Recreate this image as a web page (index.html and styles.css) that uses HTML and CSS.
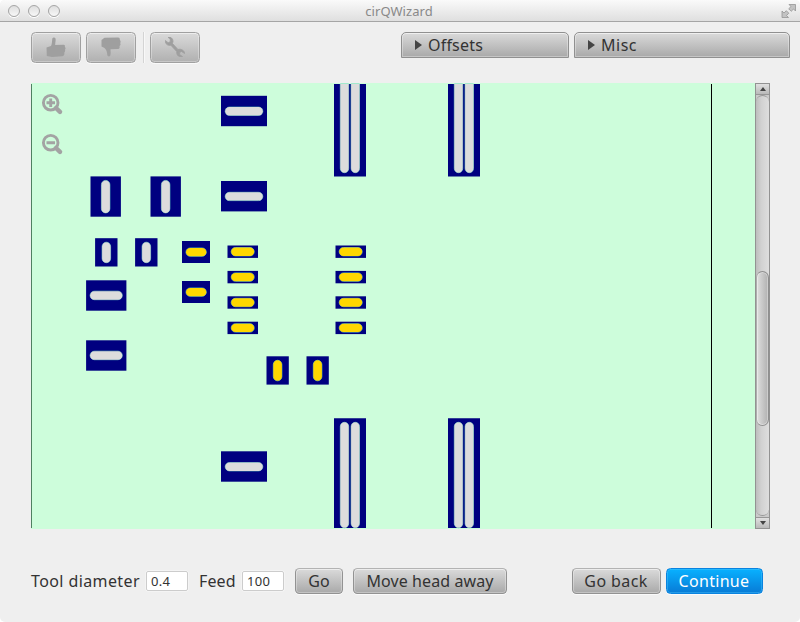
FILE: index.html
```html
<!DOCTYPE html>
<html lang="en">
<head>
<meta charset="utf-8">
<title>cirQWizard</title>
<link rel="stylesheet" href="styles.css">
</head>
<body>
<div class="window">
  <header class="titlebar">
    <div class="lights"><i></i><i></i><i></i></div>
    <h1><span>cirQWizard</span></h1>
    <svg class="expand" width="16" height="16" viewBox="0 0 16 16"><path d="M8 1.5h6.500v6.500l-2-2-2.300 2.300-2.500-2.500L10 3.500zM7.500 14.500H1V8l2 2 2.300-2.300 2.500 2.500L5.500 12.500z"/></svg>
  </header>

  <div class="toolbar">
    <button class="btn tool" aria-label="Good"><svg width="20" height="20" viewBox="0 0 20 20"><path d="M0.500 10.500 L5 9 C6 7.500 6 4 6.300 1.500 C7 0 9 0.200 9.500 1.500 C10 3.500 9.200 5.500 9.200 8 L17.500 7.700 C19 7.700 19.300 9 18.800 10 C19.800 10.500 19.800 12 19 12.800 C19.500 14 19 15 18.300 15.500 C18.700 17.500 18 19 16.500 19.200 L6 20 L0.800 19z"/></svg></button>
    <button class="btn tool" aria-label="Bad"><svg width="20" height="20" viewBox="0 0 20 20"><path d="M0.500 3 L3.500 0.800 L17 0.500 C19 0.500 19 2 18.800 3 C20 4 19.700 5.500 19.200 6 C19.800 7.500 19.500 8.700 18.500 9 C19 10.500 18.500 12 17 12 L9.500 12.200 C9.500 14.500 10 16.500 9.300 18.500 C8.500 20 6.500 19.500 6.300 18 C6.300 15.500 5.500 13 3.500 11 L0.500 9.500z"/></svg></button>
    <span class="separator"></span>
    <button class="btn tool wrench" aria-label="Settings"><svg width="20" height="20" viewBox="0 0 20 20"><path d="M3 0.300 C5.500-0.500 8 1.500 8 4.500 L7.500 6.500 L13 12.500 C16 11.500 19.500 13.500 19.700 16.500 L16.500 14.500 L14.500 15.500 L14.700 17.700 L17.500 19.500 C14.500 20.700 11.300 18.500 11.700 14.500 L5.800 8.200 C3 9 0 7 0.200 3.500 L3.200 5.700 L5.300 4.700 L5.200 2z"/></svg></button>
    <div class="pane offsets"><i class="arrow"></i><span class="t-offsets">Offsets</span></div>
    <div class="pane misc"><i class="arrow"></i><span class="t-misc">Misc</span></div>
  </div>

  <main class="board">
    <svg class="canvas" width="724" height="446" viewBox="31 83 724 446">
      <defs>
        <g id="header-top"><path class="pad" d="M0 84h32v92.600H0z"/><path class="slot" d="M6.300 84h8.400v84.500a4.200 4.200 0 0 1-8.400 0zM17.100 84h8.400v84.500a4.200 4.200 0 0 1-8.400 0z"/></g>
        <g id="header-bottom"><path class="pad" d="M0 418.300h32V528H0z"/><rect class="slot" x="6.300" y="422.300" width="8.400" height="105.400" rx="4.200"/><rect class="slot" x="17.100" y="422.300" width="8.400" height="105.400" rx="4.200"/></g>
        <g id="wide"><rect class="pad" width="46" height="30.400"/><rect class="slot" x="4.200" y="11.300" width="37.600" height="8.300" rx="4.150"/></g>
        <g id="tall"><rect class="pad" width="30.400" height="40.300"/><rect class="slot" x="10.900" y="4" width="8.500" height="32.500" rx="4.250"/></g>
        <g id="small"><rect class="pad" width="22.400" height="28.300"/><rect class="slot" x="7" y="4" width="8.500" height="20.500" rx="4.250"/></g>
        <g id="medium"><rect class="pad" width="40.300" height="30.400"/><rect class="slot" x="4" y="10.900" width="32.200" height="8.500" rx="4.250"/></g>
        <g id="active-wide"><rect class="pad" width="28" height="22"/><rect class="slot active" x="4" y="7" width="20.300" height="8.300" rx="4.150"/></g>
        <g id="active-pin"><rect class="pad" width="30.500" height="12.400"/><rect class="slot active" x="3.700" y="2" width="23" height="8.400" rx="4.200"/></g>
      </defs>
      <path class="edge left" d="M31.500 84v444"/>
      <path class="edge" d="M711.500 84v444"/>
      <use href="#header-top" x="334"/><use href="#header-top" x="448"/>
      <use href="#header-bottom" x="334"/><use href="#header-bottom" x="448"/>
      <use href="#wide" x="221" y="95.800"/><use href="#wide" x="221" y="181"/><use href="#wide" x="221" y="451.300"/>
      <use href="#tall" x="90.500" y="176.400"/><use href="#tall" x="150.500" y="176.400"/>
      <use href="#small" x="95.100" y="238.200"/><use href="#small" x="135.100" y="238.200"/>
      <use href="#medium" x="86.100" y="280.300"/><use href="#medium" x="86.100" y="340.300"/>
      <use href="#active-wide" x="182" y="241"/><use href="#active-wide" x="182" y="281"/>
      <use href="#active-pin" x="227.500" y="245.500"/><use href="#active-pin" x="227.500" y="270.900"/><use href="#active-pin" x="227.500" y="296.300"/><use href="#active-pin" x="227.500" y="321.700"/>
      <use href="#active-pin" x="335.500" y="245.500"/><use href="#active-pin" x="335.500" y="270.900"/><use href="#active-pin" x="335.500" y="296.300"/><use href="#active-pin" x="335.500" y="321.700"/>
      <g><rect class="pad" x="266.500" y="356.300" width="22.300" height="28.300"/><rect class="slot active" x="273.300" y="360.300" width="8.600" height="20.500" rx="4.300"/>
      <rect class="pad" x="306.500" y="356.300" width="22.300" height="28.300"/><rect class="slot active" x="313.300" y="360.300" width="8.600" height="20.500" rx="4.300"/></g>
      <g class="zoom"><circle cx="50.700" cy="102.700" r="7.300"/><path class="handle" d="M56 108l4 3.900"/><path d="M46.500 102.700h8.500M50.700 98.500v8.500"/></g>
      <g class="zoom"><circle cx="50.700" cy="142.700" r="7.300"/><path class="handle" d="M56 148l4 3.900"/><path d="M46.500 142.700h8.500"/></g>
    </svg>
    <div class="scrollbar">
      <span class="cap"><i class="up"></i></span>
      <div class="track"><div class="thumb"></div></div>
      <span class="cap"><i class="down"></i></span>
    </div>
  </main>

  <footer class="controls">
    <label class="t-tool" for="tool">Tool diameter</label>
    <input id="tool" class="field" value="0.4">
    <label class="t-feed" for="feed">Feed</label>
    <input id="feed" class="field" value="100">
    <button class="btn go"><span class="t-go">Go</span></button>
    <button class="btn move"><span class="t-move">Move head away</span></button>
    <button class="btn back"><span class="t-back">Go back</span></button>
    <button class="btn continue"><span class="t-continue">Continue</span></button>
  </footer>
</div>
</body>
</html>
```

FILE: styles.css
```css
* { box-sizing: border-box; }
html { background: #fff; }
body { margin: 0; font: 16px/20px "Noto Sans", "Open Sans", sans-serif; color: #333; }
.window { width: 800px; height: 622px; background: #efefef; border-radius: 5px; overflow: hidden; display: flex; flex-direction: column; }

.titlebar { height: 22px; flex: none; display: flex; align-items: center; background: linear-gradient(#fafafa, #dfdfdf); border-bottom: 1px solid #a5a5a5; }
.lights { display: flex; gap: 8px; width: 100px; padding-left: 8px; }
.lights i { width: 12px; height: 12px; border-radius: 50%; border: 1px solid #a4a4a4; background: linear-gradient(#dedede, #f8f8f8); box-shadow: 0 1px #fff; }
h1 { flex: 1; margin: 0 0 0 -2px; text-align: center; font-size: 13px; line-height: 20px; font-weight: 400; color: #898989; letter-spacing: .05px; }
.expand { margin: 1px 3px 0 81px; fill: #c3c3c3; stroke: #969696; stroke-width: .8; }

.toolbar { display: flex; height: 41px; padding: 10px 10px 0 31px; flex: none; }
.btn { font: inherit; color: #333; border: 1px solid #929292; border-top-color: #b3b3b3; border-radius: 4.500px; padding: 0; background: linear-gradient(#dadada, #a9a9a9); box-shadow: inset 0 0 0 1px rgba(255,255,255,.3), inset 0 1px rgba(255,255,255,.35), 0 1px #fafafa; height: 26px; display: flex; align-items: center; justify-content: center; white-space: nowrap; flex: none; }
.tool { width: 50px; height: 31px; margin-right: 5px; border-color: #a0a0a0; background: linear-gradient(#dadada, #b0b0b0); }
.tool svg { fill: #9f9f9f; margin-top: -1px; }
.wrench path { stroke: #9f9f9f; stroke-width: .8; stroke-linejoin: round; }
.separator { width: 1px; height: 31px; margin: 0 6px 0 2px; background: #d4d4d4; box-shadow: 1px 0 #f8f8f8; }
.pane { height: 26px; border: 1px solid #909090; border-radius: 5px 5px 0 0; background: linear-gradient(#dadada, #a9a9a9); box-shadow: inset 0 0 0 1px rgba(255,255,255,.32), inset 0 1px rgba(255,255,255,.4); display: flex; align-items: center; padding: 0 0 1px 13px; }
.offsets { width: 168px; margin-left: 196px; }
.misc { width: 216px; margin-left: 5px; }
.arrow { border-left: 7px solid #444; border-top: 5px solid transparent; border-bottom: 5px solid transparent; margin-right: 6px; }
.t-offsets { letter-spacing: .2px; }
.t-misc { letter-spacing: .5px; }

.board { margin: 20px 30px 0 31px; height: 446px; display: flex; flex: none; }
.canvas { display: block; background: #cdfddb; flex: none; }
.pad { fill: #000080; }
.slot { fill: #dcdcdc; stroke: #60c9b8; stroke-width: .8; paint-order: stroke; }
.slot.active { fill: #ffd700; }
.edge { stroke: #000; stroke-width: 1; }
.edge.left { stroke: #4f8061; }
.zoom { fill: none; stroke: #a3a3a3; stroke-width: 2.900; }
.handle { stroke-width: 4.500; stroke-linecap: round; }

.scrollbar { width: 15px; border: 1px solid #929292; display: flex; flex-direction: column; background: #cacaca; }
.cap { height: 11px; flex: none; background: linear-gradient(#e0e0e0, #b9b9b9); display: flex; align-items: center; justify-content: center; }
.cap:first-child { border-bottom: 1px solid #979797; }
.cap:last-child { border-top: 1px solid #979797; }
.up, .down { border-left: 3.500px solid transparent; border-right: 3.500px solid transparent; }
.up { border-bottom: 4px solid #444; }
.down { border-top: 4px solid #444; }
.track { flex: 1; margin: 0 0 1px; border-radius: 7px; background: linear-gradient(90deg, #bdbdbd, #d1d1d1 40%, #dedede); border: solid #979797; border-width: 1px 0; padding-top: 175px; }
.thumb { height: 155px; border-radius: 7px; border: 1px solid #8f8f8f; border-left-color: #adadad; background: linear-gradient(90deg, #dedede, #b1b1b1); box-shadow: inset 0 0 0 1px rgba(255,255,255,.35); }

.controls { display: flex; align-items: center; height: 26px; margin-top: 39px; padding: 0 37px 0 31px; flex: none; }
.controls label { white-space: nowrap; flex: none; }
.field { width: 42px; height: 20px; border: 1px solid #ccc; border-radius: 2px; background: #fff; box-shadow: 0 0 0 .5px #fafafa; padding: 0 0 0 4px; font: 13px/18px "Noto Sans", sans-serif; letter-spacing: .3px; color: #333; flex: none; }
.t-tool { width: 115px; letter-spacing: .4px; }
.t-feed { width: 43px; margin-left: 11px; letter-spacing: .1px; }
.go { width: 48px; margin-left: 11px; }
.move { width: 154px; margin-left: 10px; }
.back { width: 89px; margin-left: auto; }
.continue { width: 97px; margin-left: 5px; color: #fff; border-color: #0a83df; background: linear-gradient(#08b1ff, #087bd6); box-shadow: inset 0 0 0 1px rgba(80,200,255,.4), 0 1px #fafafa; }
.t-move { letter-spacing: .1px; }
.t-back { letter-spacing: .4px; margin-right: 1px; }
.t-continue { letter-spacing: .3px; margin-right: 1px; }
```
